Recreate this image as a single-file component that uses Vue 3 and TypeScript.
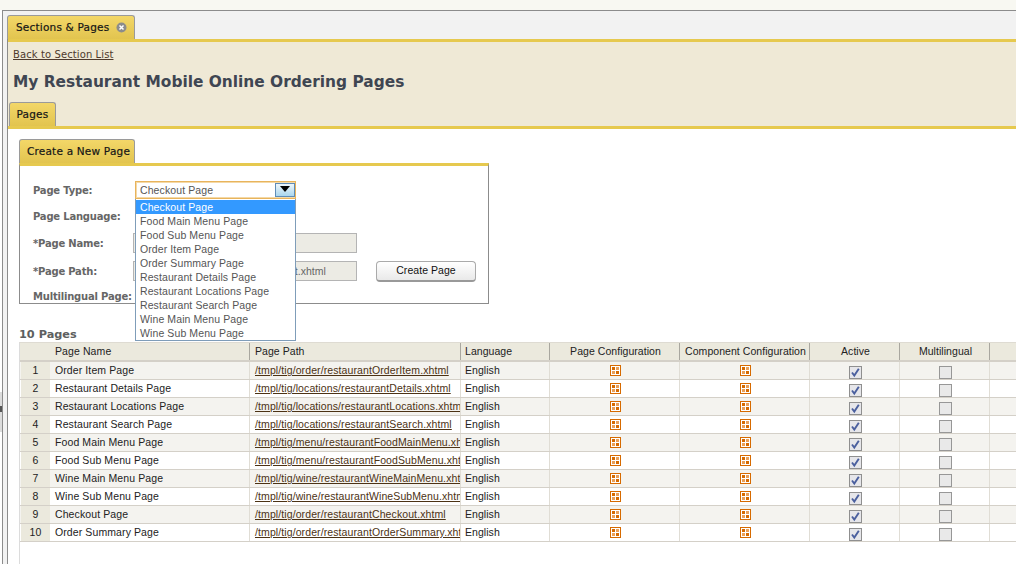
<script setup lang="ts">
interface Row { name: string; path: string }
const rows: Row[] = [
  { name: 'Order Item Page', path: '/tmpl/tig/order/restaurantOrderItem.xhtml' },
  { name: 'Restaurant Details Page', path: '/tmpl/tig/locations/restaurantDetails.xhtml' },
  { name: 'Restaurant Locations Page', path: '/tmpl/tig/locations/restaurantLocations.xhtml' },
  { name: 'Restaurant Search Page', path: '/tmpl/tig/locations/restaurantSearch.xhtml' },
  { name: 'Food Main Menu Page', path: '/tmpl/tig/menu/restaurantFoodMainMenu.xhtml' },
  { name: 'Food Sub Menu Page', path: '/tmpl/tig/menu/restaurantFoodSubMenu.xhtml' },
  { name: 'Wine Main Menu Page', path: '/tmpl/tig/wine/restaurantWineMainMenu.xhtml' },
  { name: 'Wine Sub Menu Page', path: '/tmpl/tig/wine/restaurantWineSubMenu.xhtml' },
  { name: 'Checkout Page', path: '/tmpl/tig/order/restaurantCheckout.xhtml' },
  { name: 'Order Summary Page', path: '/tmpl/tig/order/restaurantOrderSummary.xhtml' },
]
const options: string[] = [
  'Checkout Page', 'Food Main Menu Page', 'Food Sub Menu Page', 'Order Item Page', 'Order Summary Page',
  'Restaurant Details Page', 'Restaurant Locations Page', 'Restaurant Search Page', 'Wine Main Menu Page', 'Wine Sub Menu Page',
]
</script>

<template>
  <div class="page">
    <div class="strip"></div>
    <div class="frame">
      <div class="handle"><i></i></div>
      <div class="tabbar">
        <div class="tab main-tab">
          <span>Sections &amp; Pages</span>
          <svg class="close" width="11" height="11" viewBox="0 0 11 11">
            <circle cx="5.5" cy="5.5" r="5" fill="#8c8c8c" />
            <path d="M3.5 3.5l4 4M7.5 3.5l-4 4" stroke="#fff" stroke-width="1.5" />
          </svg>
        </div>
      </div>
      <div class="panel">
        <div class="head">
          <a class="back">Back to Section List</a>
          <h1>My Restaurant Mobile Online Ordering Pages</h1>
          <div class="tab sub-tab">Pages</div>
        </div>
        <div class="body">
          <div class="tab new-tab">Create a New Page</div>
          <div class="form">
            <label>Page Type:</label>
            <div class="select">
              <span class="select-text">Checkout Page</span>
              <span class="select-btn">
                <svg width="10" height="6" viewBox="0 0 10 6"><path d="M0 0h10L5 6z" fill="#000" /></svg>
              </span>
              <ul class="menu">
                <li v-for="(o, i) in options" :key="o" :class="{ on: i === 0 }">{{ o }}</li>
              </ul>
            </div>
            <span class="filler"></span>
            <label>Page Language:</label>
            <span></span>
            <span class="filler"></span>
            <label>*Page Name:</label>
            <input class="field" value="Checkout Page" disabled />
            <span class="filler"></span>
            <label>*Page Path:</label>
            <input class="field" value="/tmpl/tig/order/restaurantCheckout.xhtml" disabled />
            <button class="create" type="button">Create Page</button>
            <label>Multilingual Page:</label>
          </div>
          <div class="count">10 Pages</div>
          <div class="table">
            <div class="tr th">
              <div class="c num"></div>
              <div class="c name">Page Name</div>
              <div class="c path">Page Path</div>
              <div class="c lang">Language</div>
              <div class="c conf mid">Page Configuration</div>
              <div class="c conf mid">Component Configuration</div>
              <div class="c flag mid">Active</div>
              <div class="c flag mid">Multilingual</div>
              <div class="c rest"></div>
            </div>
            <div v-for="(r, i) in rows" :key="r.name" class="tr" :class="{ odd: i % 2 === 0 }">
              <div class="c num">{{ i + 1 }}</div>
              <div class="c name">{{ r.name }}</div>
              <div class="c path"><a>{{ r.path }}</a></div>
              <div class="c lang">English</div>
              <div v-for="n in 2" :key="n" class="c conf mid">
                <svg class="grid-ic" width="11" height="11" viewBox="0 0 11 11">
                  <rect x="0.5" y="0.5" width="10" height="10" fill="#fff" stroke="#d66a00" />
                  <rect x="2" y="2" width="3" height="3" fill="#d66a00" />
                  <rect x="6" y="2" width="3" height="3" fill="#e9a05a" />
                  <rect x="2" y="6" width="3" height="3" fill="#e9a05a" />
                  <rect x="6" y="6" width="3" height="3" fill="#d66a00" />
                </svg>
              </div>
              <div class="c flag mid">
                <svg class="box" width="13" height="13" viewBox="0 0 13 13">
                  <rect x="0.5" y="0.5" width="12" height="12" fill="#e6e6ea" stroke="#8f8f8f" />
                  <path d="M3 6.5l2.3 3L9.8 2.8" fill="none" stroke="#4a5f9e" stroke-width="1.9" />
                </svg>
              </div>
              <div class="c flag mid">
                <svg class="box" width="13" height="13" viewBox="0 0 13 13">
                  <rect x="0.5" y="0.5" width="12" height="12" fill="#e9e9e9" stroke="#979797" />
                </svg>
              </div>
              <div class="c rest"></div>
            </div>
          </div>
        </div>
      </div>
    </div>
  </div>
</template>

<style>
html, body { margin: 0; overflow: hidden; background: #fff; }
</style>

<style scoped>
.page {
  width: 1016px;
  height: 564px;
  overflow: hidden;
  display: flex;
  flex-direction: column;
  background: #fff;
  color: #222;
  font-family: "Liberation Sans", Arial, sans-serif;
  font-size: 11px;
}
.strip { height: 10px; flex: none; background: #f8f8f2; }
.frame {
  position: relative;
  flex: 1;
  min-height: 0;
  margin-left: 2px;
  border-top: 1px solid #8c8c8c;
  border-left: 1px solid #8c8c8c;
  background: #f2f2f2;
  display: flex;
  flex-direction: column;
}
.handle {
  position: absolute;
  left: -3px;
  top: 381px;
  width: 2px;
  height: 40px;
  background: #dcdcdc;
}
.handle i { display: block; width: 2px; height: 6px; margin-top: 14px; background: #555; }
.tabbar { height: 28px; flex: none; padding: 4px 0 0 4px; box-sizing: border-box; display: flex; }
.tab {
  box-sizing: border-box;
  border: 1px solid #9a9a9a;
  border-bottom: 0;
  border-radius: 3px 3px 0 0;
  background: linear-gradient(#f3d768, #e2c44f);
  color: #111;
  display: flex;
  align-items: center;
  padding-bottom: 1px;
  font-family: "DejaVu Sans", Verdana, sans-serif;
  font-size: 10.5px;
  letter-spacing: 0.2px;
  -webkit-text-stroke: 0.2px #222;
}
.main-tab { width: 128px; height: 24px; padding-left: 8px; gap: 7px; }
.close { flex: none; }
.panel {
  flex: 1;
  min-height: 0;
  margin-left: 4px;
  border-left: 1px solid #8c8c8c;
  background: #fff;
  display: flex;
  flex-direction: column;
}
.head {
  flex: none;
  height: 90px;
  box-sizing: border-box;
  border-top: 3px solid #e6c94f;
  border-bottom: 3px solid #e6c94f;
  background: #efe9d6;
  padding: 6px 0 0 5px;
  display: flex;
  flex-direction: column;
  align-items: flex-start;
}
.back {
  font-family: "DejaVu Sans", Verdana, sans-serif;
  font-size: 10px;
  letter-spacing: 0.1px;
  color: #4e3a2c;
  text-decoration: underline;
  line-height: 14px;
}
h1 {
  margin: 10px 0 0;
  font-family: "DejaVu Sans", Verdana, sans-serif;
  font-size: 15.4px;
  line-height: 20px;
  font-weight: 700;
  color: #3f4652;
}
.sub-tab { margin: auto 0 0 -4px; width: 47px; height: 24px; justify-content: center; }
.body {
  flex: 1;
  min-height: 0;
  padding: 10px 0 0 11px;
  display: flex;
  flex-direction: column;
  align-items: flex-start;
}
.new-tab { width: 116px; height: 24px; padding-left: 7px; }
.form {
  box-sizing: border-box;
  width: 470px;
  height: 141px;
  flex: none;
  border: 1px solid #8c8c8c;
  border-top: 3px solid #e6c94f;
  padding: 15px 0 0 13px;
  display: grid;
  grid-template-columns: 100px 224px 1fr;
  grid-template-rows: 18px 18px 20px 20px 14px;
  row-gap: 8px;
  align-items: center;
}
label {
  font-family: "DejaVu Sans", Verdana, sans-serif;
  font-size: 10px;
  letter-spacing: -0.2px;
  font-weight: 700;
  color: #666;
  white-space: nowrap;
}
.select {
  position: relative;
  box-sizing: border-box;
  width: 161px;
  height: 18px;
  margin-left: 2px;
  border: 1px solid #e8b45c;
  background: #fff;
  box-shadow: inset 0 0 0 1px #f4d9a8;
  display: flex;
  align-items: center;
  z-index: 2;
}
.select-text { flex: 1; padding-left: 4px; color: #555; font-size: 10.5px; letter-spacing: 0.1px; }
.select-btn {
  width: 20px;
  height: 14px;
  box-sizing: border-box;
  border: 1px solid #5f8db8;
  background: linear-gradient(#eef6fb, #a9d6ee);
  display: flex;
  justify-content: center;
  padding-top: 2px;
}
.menu {
  position: absolute;
  left: -1px;
  top: 17px;
  width: 161px;
  box-sizing: border-box;
  margin: 0;
  padding: 1px 0 0;
  list-style: none;
  background: #fff;
  border: 1px solid #7f9db9;
  border-top: 0;
}
.menu li {
  height: 14px;
  line-height: 14px;
  padding-left: 4px;
  color: #555;
  font-size: 10.5px;
  letter-spacing: 0.1px;
}
.menu li.on { background: #3399ff; color: #fff; }
.field {
  box-sizing: border-box;
  width: 224px;
  height: 20px;
  padding: 0 4px;
  border: 1px solid #b4b4b4;
  background: #ecebe4;
  color: #666;
  font: 10.5px "Liberation Sans", Arial, sans-serif;
  letter-spacing: 0.03px;
  opacity: 1;
}
.create {
  box-sizing: border-box;
  width: 100px;
  height: 21px;
  margin-left: 19px;
  padding: 0 0 2px;
  border: 1px solid #aaa;
  border-bottom: 2px solid #999;
  border-radius: 4px;
  background: linear-gradient(#ffffff, #e9e9e9);
  color: #111;
  font: 10.5px "Liberation Sans", Arial, sans-serif;
  letter-spacing: 0.05px;
}
.count {
  margin-top: 24px;
  height: 14px;
  line-height: 14px;
  font-family: "DejaVu Sans", Verdana, sans-serif;
  font-size: 11.3px;
  font-weight: 700;
  color: #5d5f60;
  flex: none;
}
.table {
  flex: 1;
  width: 997px;
  border-left: 1px solid #dcdcdc;
  border-top: 1px solid #dedbd2;
}
.tr {
  display: flex;
  height: 18px;
  box-sizing: border-box;
  border-bottom: 1px solid #d4d0c8;
  line-height: 16px;
}
.tr.odd { background: #f4f3ef; }
.th {
  height: 19px;
  border-bottom: 2px solid #d4d0c8;
  background: #ebe9dd;
}
.c {
  box-sizing: border-box;
  flex: none;
  padding-left: 4px;
  border-right: 1px solid #e0ddd5;
  white-space: nowrap;
  overflow: hidden;
  font-size: 10.5px;
  letter-spacing: 0.05px;
  color: #222;
}
.th .c { border-right: 1px solid #a9a79f; line-height: 17px; }
.num { width: 29px; padding: 0; text-align: center; background: #ebe9dd; border-right: 0; margin-left: 1px; }
.th .num { border-right: 0; }
.name { width: 200px; padding-left: 5px; letter-spacing: 0.1px; }
.path { width: 211px; padding-left: 5px; }
.path a { color: #4c3214; text-decoration: underline; letter-spacing: 0.1px; }
.lang { width: 89px; }
.conf { width: 130px; }
.flag { width: 90px; }
.rest { flex: 1; border-right: 0; }
.mid { text-align: center; padding: 0 0 0 2px; }
.grid-ic { display: block; margin: 3px auto 0; }
.box { display: block; margin: 4px auto 0; }
</style>
